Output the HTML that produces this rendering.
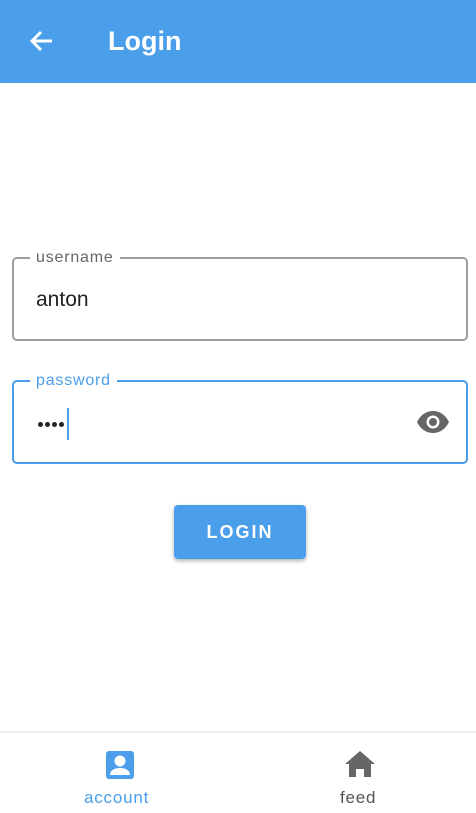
<!DOCTYPE html>
<html><head><style>
*{margin:0;padding:0;box-sizing:border-box}
body{width:476px;height:813px;position:relative;background:#fff;font-family:"Liberation Sans",sans-serif;overflow:hidden}
.bar{position:absolute;left:0;top:0;width:476px;height:83px;background:#4a9eea}
.bar .t{position:absolute;left:108px;top:26px;color:#fff;font-size:27px;font-weight:bold}
.f{position:absolute;left:12px;width:456px;height:84px;border-radius:5px}
.f1{top:257px;border:2px solid #9e9e9e}
.f2{top:380px;border:2px solid #4a9eea}
.lab{position:absolute;top:-9px;left:16px;background:#fff;padding:0 6px;font-size:16px;letter-spacing:.8px;line-height:16px}
.val{position:absolute;left:22px;top:29px;font-size:21px;color:#222}
.btn{position:absolute;left:174px;top:505px;width:132px;height:54px;background:#4a9eea;border-radius:4px;color:#fff;font-weight:bold;font-size:18px;letter-spacing:2px;text-align:center;line-height:54px;box-shadow:0 2px 4px rgba(0,0,0,.3)}
.nav{position:absolute;left:0;top:731px;width:476px;height:82px;border-top:2px solid #eee}
.nl{position:absolute;top:55px;font-size:17px;letter-spacing:.8px}
.dot{position:absolute;top:40px;width:5px;height:5px;border-radius:50%;background:#222}
</style></head><body>
<div class="bar">
<svg style="position:absolute;left:28px;top:29px" width="26" height="24" viewBox="0 0 26 24"><path d="M24 12H4M13 3L4 12l9 9" stroke="#fff" stroke-width="3" fill="none"/></svg>
<div class="t">Login</div></div>
<div class="f f1"><div class="lab" style="color:#666">username</div><div class="val">anton</div></div>
<div class="f f2"><div class="lab" style="color:#4a9eea">password</div>
<div class="dot" style="left:24px"></div><div class="dot" style="left:31px"></div><div class="dot" style="left:38px"></div><div class="dot" style="left:45px"></div>
<div style="position:absolute;left:53px;top:26px;width:2px;height:32px;background:#4a9eea"></div>
<svg style="position:absolute;left:402px;top:27px" width="34" height="26" viewBox="0 0 34 26"><path d="M1 13C5 5 11 2 17 2s12 3 16 11c-4 8-10 11-16 11S5 21 1 13z" fill="#666"/><circle cx="17" cy="13" r="6.5" fill="#fff"/><circle cx="17" cy="13" r="4" fill="#666"/></svg>
</div>
<div class="btn">LOGIN</div>
<div class="nav">
<svg style="position:absolute;left:106px;top:18px" width="28" height="28" viewBox="0 0 28 28"><rect x="0" y="0" width="28" height="28" rx="3" fill="#4a9eea"/><circle cx="14" cy="10" r="5.5" fill="#fff"/><path d="M4 24c0-5 5-7 10-7s10 2 10 7z" fill="#fff"/></svg>
<div class="nl" style="left:84px;color:#4a9eea">account</div>
<svg style="position:absolute;left:345px;top:18px" width="30" height="26" viewBox="0 0 30 26"><path d="M15 0L0 13h4v13h7v-8h8v8h7V13h4z" fill="#666"/></svg>
<div class="nl" style="left:340px;color:#555">feed</div>
</div>
</body></html>
